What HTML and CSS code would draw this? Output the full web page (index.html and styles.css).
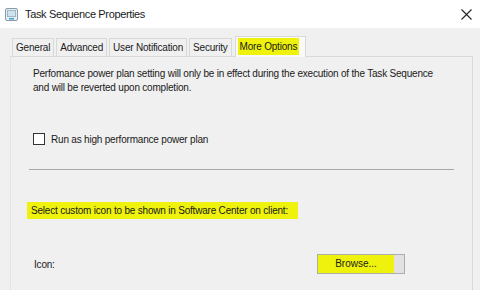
FILE: index.html
```html
<!DOCTYPE html>
<html lang="en">
<head>
    <meta charset="UTF-8">
    <title>Task Sequence Properties</title>
    <link rel="stylesheet" href="styles.css">
</head>
<body>
    <div class="titlebar">
        <svg class="app-icon" width="13" height="13" viewBox="0 0 13 13">
            <rect x="0.5" y="0.5" width="12" height="12" rx="1.5" fill="#e8eef2" stroke="#8a9aa6"/>
            <rect x="2.5" y="2.5" width="8" height="6" fill="#cfe3ee" stroke="#9fb6c4"/>
            <rect x="4" y="10" width="5" height="1.5" fill="#35a6d8"/>
        </svg>
        <span class="title">Task Sequence Properties</span>
        <svg class="close" width="11" height="11" viewBox="0 0 11 11">
            <path d="M0.5 0.5 L10.5 10.5 M10.5 0.5 L0.5 10.5" stroke="#222" stroke-width="1.1"/>
        </svg>
    </div>

    <div class="dialog">
        <div class="tabs">
            <div class="tab">General</div>
            <div class="tab">Advanced</div>
            <div class="tab">User Notification</div>
            <div class="tab">Security</div>
            <div class="tab selected"><span class="mark">More Options</span></div>
        </div>
        <div class="panel">
            <p class="note">Perfomance power plan setting will only be in effect during the execution of the Task Sequence<br>and will be reverted upon completion.</p>
            <label class="check">
                <span class="box"></span>
                Run as high performance power plan
            </label>
            <hr class="divider">
            <p class="section"><span class="mark">Select custom icon to be shown in Software Center on client:</span></p>
            <div class="icon-row">
                <span class="icon-label">Icon:</span>
                <button class="browse"><span class="mark">Browse...</span></button>
            </div>
        </div>
    </div>
</body>
</html>
```

FILE: styles.css
```css
:root {
    --face: #f0f0f0;
    --edge: #d9d9d9;
    --mark: #eef20c;
    --text: #1a1a1a;
}

body {
    margin: 0;
    width: 480px;
    height: 290px;
    overflow: hidden;
    background-color: var(--face);
    font-family: 'Liberation Sans', Arial, sans-serif;
    font-size: 10px;
    letter-spacing: -0.2px;
    color: var(--text);
}

.titlebar {
    height: 28px;
    background-color: white;
    display: flex;
    align-items: center;
    padding: 0 8px 0 5px;
}

.app-icon {
    margin-right: 7px;
}

.title {
    font-size: 11px;
    letter-spacing: -0.35px;
    flex: 1;
}

.dialog {
    padding: 8px 7px 0 10px;
}

.tabs {
    display: flex;
    align-items: flex-end;
    padding-left: 2px;
    gap: 2px;
}

.tab {
    height: 17px;
    line-height: 17px;
    padding: 0 3px;
    border: 1px solid var(--edge);
    border-bottom: none;
    background-color: #f0f0f0;
}

.tab.selected {
    height: 20px;
    line-height: 19px;
    padding: 0 6px 0 2px;
    margin-left: 1px;
    background-color: #f9f9f9;
    margin-bottom: -1px;
    position: relative;
}

.mark {
    background-color: var(--mark);
}

.tab.selected .mark {
    padding: 3px 2px;
}

.panel {
    height: 240px;
    border: 1px solid var(--edge);
    border-left-color: #e4e4e4;
    padding: 0 20px 0 20px;
}

.note {
    margin: 10px 0 0 2px;
    line-height: 14px;
}

.check {
    display: flex;
    align-items: center;
    gap: 6px;
    margin: 38px 0 0 2px;
}

.box {
    width: 10px;
    height: 10px;
    border: 1px solid #333;
    background-color: white;
}

.divider {
    border: none;
    border-top: 1px solid #a8a8a8;
    margin: 24px 0 0 -2px;
    width: 425px;
}

.section {
    margin: 35px 0 0 -4px;
}

.section .mark {
    padding: 3px 10px 3px 4px;
}

.icon-row {
    display: flex;
    align-items: center;
    margin: 38px 0 0 3px;
}

.icon-label {
    width: 283px;
}

.browse {
    width: 88px;
    height: 20px;
    font: inherit;
    color: var(--text);
    border: 1px solid #adadad;
    background-color: #e1e1e1;
    padding: 0;
    text-align: left;
}

.browse .mark {
    display: inline-block;
    width: 76px;
    height: 18px;
    line-height: 18px;
    text-align: center;
}
```
